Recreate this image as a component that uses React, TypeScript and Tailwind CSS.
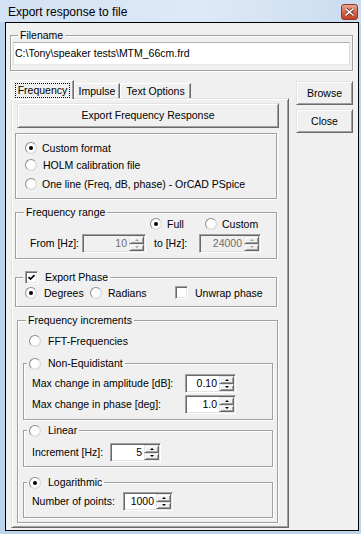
import type { ReactNode } from "react";

const FONT = "font-['Liberation_Sans',Arial,sans-serif]";
const RAISED =
  "border border-t-[#e3e3e3] border-l-[#e3e3e3] border-r-[#696969] border-b-[#696969] shadow-[inset_1px_1px_0_#fff,inset_-1px_-1px_0_#a0a0a0]";
const SUNKEN =
  "border border-t-[#a0a0a0] border-l-[#a0a0a0] border-r-white border-b-white shadow-[inset_1px_1px_0_#696969,inset_-1px_-1px_0_#e3e3e3]";

function Radio({ checked = false }: { checked?: boolean }) {
  return (
    <span className="flex h-[12px] w-[12px] shrink-0 items-center justify-center rounded-full border border-t-[#8f8f8f] border-l-[#8f8f8f] border-r-[#d8d8d8] border-b-[#d8d8d8] bg-[radial-gradient(circle_at_45%_45%,#fff_45%,#e2e2e2)]">
      {checked && <span className="h-[4px] w-[4px] rounded-full bg-black" />}
    </span>
  );
}

function Checkbox({ checked = false }: { checked?: boolean }) {
  return (
    <span className={`flex h-[13px] w-[13px] shrink-0 items-center justify-center bg-white ${SUNKEN}`}>
      {checked && (
        <svg width="7" height="7" viewBox="0 0 7 7">
          <path d="M0.5 3 L2.5 5 L6.5 1" stroke="black" strokeWidth="1.6" fill="none" />
        </svg>
      )}
    </span>
  );
}

function SpinArrow({ up, disabled }: { up?: boolean; disabled?: boolean }) {
  return (
    <span className={`flex flex-1 items-center justify-center bg-[#f0f0f0] ${RAISED}`}>
      {up ? (
        <span
          className={`h-0 w-0 border-x-[2px] border-b-[2px] border-x-transparent ${
            disabled ? "border-b-[#a0a0a0]" : "border-b-black"
          }`}
        />
      ) : (
        <span
          className={`h-0 w-0 border-x-[2px] border-t-[2px] border-x-transparent ${
            disabled ? "border-t-[#a0a0a0]" : "border-t-black"
          }`}
        />
      )}
    </span>
  );
}

function SpinBox({
  value,
  className,
  disabled = false,
}: {
  value: string;
  className: string;
  disabled?: boolean;
}) {
  return (
    <div
      className={`flex h-[19px] shrink-0 ${SUNKEN} ${className} ${
        disabled ? "bg-[#f0f0f0] text-[#6d6d6d]" : "bg-white"
      }`}
    >
      <div className="flex flex-1 items-center justify-end pr-[2px]">{value}</div>
      <div className="my-[1px] mr-[1px] flex w-[15px] flex-col">
        <SpinArrow up disabled={disabled} />
        <SpinArrow disabled={disabled} />
      </div>
    </div>
  );
}

function GroupBox({
  title,
  titleLeft = "left-[8px]",
  className,
  children,
}: {
  title?: ReactNode;
  titleLeft?: string;
  className: string;
  children?: ReactNode;
}) {
  return (
    <div
      className={`relative shrink-0 border border-[#a0a0a0] shadow-[inset_1px_1px_0_#fff,1px_1px_0_#fff] ${className}`}
    >
      {title && (
        <div
          className={`absolute -top-[7px] flex h-[13px] items-center bg-[#f0f0f0] px-[2px] ${titleLeft}`}
        >
          {title}
        </div>
      )}
      {children}
    </div>
  );
}

export default function App() {
  return (
    <div
      className={`h-[534px] w-[361px] overflow-hidden bg-[#bed3ec] text-[10.5px] leading-[13px] text-black ${FONT}`}
    >
      {/* Title bar */}
      <div className="flex h-[22px] bg-[linear-gradient(90deg,#d3e2f4,#dde9f6_55%,#cbdcf0)]">
        <span className="ml-[8px] mt-[5px] text-[12px] leading-[14px]">Export response to file</span>
        <div className="ml-auto mr-[3px] mt-[4px] flex h-[16px] w-[17px] items-center justify-center rounded-[3px] border border-[#8a3a2a] bg-[linear-gradient(#e9a791,#d5664a_50%,#c2411f)]">
          <svg width="9" height="8" viewBox="0 0 9 8">
            <path d="M1 1 L8 7 M8 1 L1 7" stroke="#5a2215" strokeWidth="3" strokeLinecap="square" />
            <path d="M1 1 L8 7 M8 1 L1 7" stroke="white" strokeWidth="1.6" strokeLinecap="square" />
          </svg>
        </div>
      </div>

      {/* Client area */}
      <div className="ml-[5px] h-[509px] w-[354px] border border-black bg-[#f0f0f0]">
        <GroupBox title="Filename" titleLeft="left-[7px]" className="ml-[4px] mt-[12px] h-[36px] w-[343px]">
          <div className="ml-[2px] mt-[6px] flex h-[23px] w-[337px] items-center border border-t-[#abadb3] border-l-[#dbdfe6] border-r-[#dbdfe6] border-b-[#e3e9ef] bg-white pl-[1px]">
            {"C:\\Tony\\speaker tests\\MTM_66cm.frd"}
          </div>
        </GroupBox>

        <div className="ml-[5px] mt-[9px] flex">
          <div className="w-[278px]">
            {/* Tabs */}
            <div className="flex h-[18px] items-end">
              <div className="relative z-10 -mb-[1px] flex h-[19px] w-[63px] items-center justify-center border-l border-r border-t border-l-white border-t-white border-r-[#696969] bg-[#f0f0f0] shadow-[inset_-1px_0_0_#a0a0a0]">
                <span className="border border-dotted border-black px-[2px]">Frequency</span>
              </div>
              <div className="flex h-[15px] w-[46px] items-center justify-center border-l border-r border-t border-l-white border-t-white border-r-[#696969] shadow-[inset_-1px_0_0_#a0a0a0]">
                Impulse
              </div>
              <div className="flex h-[15px] w-[71px] items-center justify-center border-l border-r border-t border-l-white border-t-white border-r-[#696969] shadow-[inset_-1px_0_0_#a0a0a0]">
                Text Options
              </div>
            </div>

            {/* Tab page */}
            <div className={`flex h-[430px] flex-col ${RAISED}`}>
              <div className={`ml-[5px] mt-[4px] flex h-[25px] w-[262px] items-center justify-center ${RAISED}`}>
                Export Frequency Response
              </div>

              <GroupBox className="ml-[3px] mt-[5px] h-[66px] w-[262px]">
                <div className="ml-[9px] mt-[6px] flex h-[16px] items-center gap-[5px]">
                  <Radio checked />
                  <span>Custom format</span>
                </div>
                <div className="ml-[9px] mt-[1px] flex h-[16px] items-center gap-[6px]">
                  <Radio />
                  <span>HOLM calibration file</span>
                </div>
                <div className="ml-[9px] mt-[3px] flex h-[16px] items-center gap-[5px]">
                  <Radio />
                  <span>One line (Freq, dB, phase) - OrCAD PSpice</span>
                </div>
              </GroupBox>

              <GroupBox title="Frequency range" className="ml-[3px] mt-[13px] h-[47px] w-[262px]">
                <div className="mt-[4px] flex h-[14px] items-center pl-[134px]">
                  <Radio checked />
                  <span className="ml-[5px] w-[17px]">Full</span>
                  <span className="ml-[21px]">
                    <Radio />
                  </span>
                  <span className="ml-[5px]">Custom</span>
                </div>
                <div className="mt-[3px] flex h-[19px] items-center pl-[14px]">
                  <span className="w-[52px]">From [Hz]:</span>
                  <SpinBox value="10" className="w-[64px]" disabled />
                  <span className="ml-[8px] w-[45px]">to [Hz]:</span>
                  <SpinBox value="24000" className="w-[62px]" disabled />
                </div>
              </GroupBox>

              <GroupBox
                title={
                  <>
                    <Checkbox checked />
                    <span className="ml-[7px]">Export Phase</span>
                  </>
                }
                titleLeft="left-[7px]"
                className="ml-[3px] mt-[18px] h-[30px] w-[262px]"
              >
                <div className="mt-[8px] flex h-[14px] items-center pl-[9px]">
                  <Radio checked />
                  <span className="ml-[7px] w-[46px] shrink-0">Degrees</span>
                  <Radio />
                  <span className="ml-[6px] w-[50px] shrink-0">Radians</span>
                  <span className="ml-[17px] -mt-[2px]">
                    <Checkbox />
                  </span>
                  <span className="ml-[7px]">Unwrap phase</span>
                </div>
              </GroupBox>

              <GroupBox title="Frequency increments" className="ml-[5px] mt-[13px] h-[203px] w-[261px]">
                <div className="mt-[13px] flex h-[14px] items-center gap-[7px] pl-[11px]">
                  <Radio />
                  <span>FFT-Frequencies</span>
                </div>

                <GroupBox
                  title={
                    <>
                      <Radio />
                      <span className="ml-[7px]">Non-Equidistant</span>
                    </>
                  }
                  titleLeft="left-[3px]"
                  className="ml-[5px] mt-[15px] h-[57px] w-[250px]"
                >
                  <div className="mt-[10px] flex h-[19px] items-center pl-[8px]">
                    <span className="w-[153px]">Max change in amplitude [dB]:</span>
                    <SpinBox value="0.10" className="w-[51px]" />
                  </div>
                  <div className="mt-[2px] flex h-[19px] items-center pl-[8px]">
                    <span className="w-[153px]">Max change in phase [deg]:</span>
                    <SpinBox value="1.0" className="w-[51px]" />
                  </div>
                </GroupBox>

                <GroupBox
                  title={
                    <>
                      <Radio />
                      <span className="ml-[7px]">Linear</span>
                    </>
                  }
                  titleLeft="left-[3px]"
                  className="ml-[5px] mt-[10px] h-[37px] w-[250px]"
                >
                  <div className="mt-[12px] flex h-[19px] items-center pl-[8px]">
                    <span className="w-[78px]">Increment [Hz]:</span>
                    <SpinBox value="5" className="w-[51px]" />
                  </div>
                </GroupBox>

                <GroupBox
                  title={
                    <>
                      <Radio checked />
                      <span className="ml-[7px]">Logarithmic</span>
                    </>
                  }
                  titleLeft="left-[3px]"
                  className="ml-[5px] mt-[15px] h-[36px] w-[250px]"
                >
                  <div className="mt-[9px] flex h-[19px] items-center pl-[8px]">
                    <span className="w-[91px]">Number of points:</span>
                    <SpinBox value="1000" className="w-[50px]" />
                  </div>
                </GroupBox>
              </GroupBox>
            </div>
          </div>

          {/* Buttons */}
          <div className="ml-[7px] flex w-[57px] flex-col">
            <div className={`mt-[1px] flex h-[24px] items-center justify-center ${RAISED}`}>Browse</div>
            <div className={`mt-[4px] flex h-[24px] items-center justify-center ${RAISED}`}>Close</div>
          </div>
        </div>
      </div>
    </div>
  );
}
